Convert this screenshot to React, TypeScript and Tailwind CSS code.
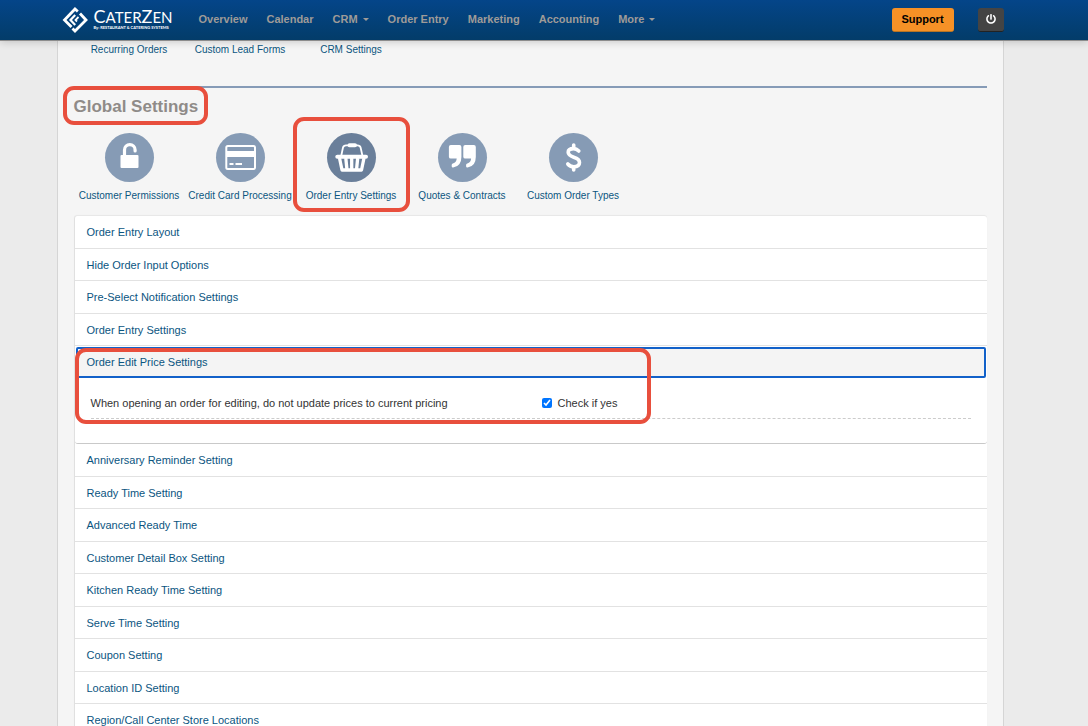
import React, { useState } from 'react';
import { FaPowerOff } from 'react-icons/fa';

const navItems = [
  { label: 'Overview', menu: false },
  { label: 'Calendar', menu: false },
  { label: 'CRM', menu: true },
  { label: 'Order Entry', menu: false },
  { label: 'Marketing', menu: false },
  { label: 'Accounting', menu: false },
  { label: 'More', menu: true },
];

const sectionsBefore = ['Order Entry Layout', 'Hide Order Input Options', 'Pre-Select Notification Settings', 'Order Entry Settings'];

const sectionsAfter = [
  'Anniversary Reminder Setting',
  'Ready Time Setting',
  'Advanced Ready Time',
  'Customer Detail Box Setting',
  'Kitchen Ready Time Setting',
  'Serve Time Setting',
  'Coupon Setting',
  'Location ID Setting',
  'Region/Call Center Store Locations',
];

const Logo: React.FC = () => (
  <a href="#" className="flex items-center gap-[6px] text-white">
    <svg viewBox="0 0 26 26" className="size-[26px]" fill="none" stroke="currentColor" strokeWidth="2.8">
      <path d="M15.8 4.5L13 2L2.5 13L9.5 20M18 6.5L24 13L13 24L10.5 21.5" />
      <path d="M13.2 8L8.5 13L13.2 18" strokeWidth="2.2" />
      <path d="M16.5 10L13.5 13L15 14.5" strokeWidth="1.8" />
    </svg>
    <span className="flex flex-col pt-px font-[Lato,sans-serif]">
      <span className="text-[15px] leading-[15px]">
        <span className="text-[18px]">C</span>ATER<span className="text-[18px]">Z</span>EN
      </span>
      <span className="text-[4px] leading-[6px] font-bold whitespace-nowrap">By: RESTAURANT &amp; CATERING SYSTEMS</span>
    </span>
  </a>
);

const UnlockIcon = () => (
  <svg viewBox="0 0 49 49" className="size-[49px]">
    <rect x="15.5" y="22" width="18" height="13" rx="1" fill="white" />
    <path d="M19.5 23V17a5.3 5.3 0 0 1 10.6 0v1" fill="none" stroke="white" strokeWidth="3.2" strokeLinecap="round" />
  </svg>
);

const CardIcon = () => (
  <svg viewBox="0 0 49 49" className="size-[49px]" fill="white">
    <rect x="10.3" y="13" width="28.7" height="23" rx="1.5" fill="none" stroke="white" strokeWidth="2" />
    <path d="M10 18h29v6H10zM13.5 30h4v2h-4zM19.5 30H26v2h-6.5z" />
  </svg>
);

const BasketIcon = () => (
  <svg viewBox="0 0 49 49" className="size-[49px]" fill="none" stroke="white">
    <path d="M14.2 23L16 14.5Q16.6 12.3 19 12.3H30.500Q33 12.300 33.600 14.500L35.500 23" strokeWidth="1.8" />
    <path d="M22.500 12.300h5.500" strokeWidth="4" strokeLinecap="round" />
    <path d="M10.300 23.700H39" strokeWidth="4" strokeLinecap="round" />
    <path d="M12.500 25L15 37H34.500L37 25M18.800 25L20 37M24.700 25V37M30.700 25L29.500 37" strokeWidth="3.3" strokeLinejoin="round" />
  </svg>
);

const QuoteIcon = () => (
  <svg viewBox="0 0 49 49" className="size-[49px]" fill="white">
    <path d="M12.800 12h8.700q1.900 0 1.900 1.900v10q0 9.200-8.200 10.600-1.500.200-1.500-1.300v-1.200q0-1.200 1.200-1.500 3.600-1 3.800-4.900H12.800q-1.900 0-1.900-1.900v-9.800q0-1.900 1.900-1.900z" />
    <path d="M27.200 12h8.700q1.900 0 1.900 1.900v10q0 9.200-8.200 10.600-1.500.200-1.500-1.300v-1.200q0-1.200 1.200-1.500 3.600-1 3.800-4.900H27.200q-1.900 0-1.900-1.900v-9.800q0-1.900 1.900-1.900z" />
  </svg>
);

const DollarIcon = () => (
  <svg viewBox="0 0 49 49" className="size-[49px]" fill="none" stroke="white" strokeWidth="3.6" strokeLinecap="round">
    <path d="M29.800 18Q27.500 15.600 24.500 15.600Q19.200 15.600 19.200 19.300Q19.200 22.400 24.700 24.200Q30.500 26 30.500 29.500Q30.500 33.700 24.700 33.700Q21 33.700 18.800 31" />
    <path d="M24.700 12V15M24.700 34V37" />
  </svg>
);

const settings = [
  { label: 'Customer Permissions', icon: <UnlockIcon />, active: false },
  { label: 'Credit Card Processing', icon: <CardIcon />, active: false },
  { label: 'Order Entry Settings', icon: <BasketIcon />, active: true },
  { label: 'Quotes & Contracts', icon: <QuoteIcon />, active: false },
  { label: 'Custom Order Types', icon: <DollarIcon />, active: false },
];

const SectionRow: React.FC<{ label: string }> = ({ label }) => (
  <li className="border-b border-[#e2e2e2] odd:h-[33px] even:h-8">
    <button type="button" className="h-full w-full px-3 pt-px text-left text-[#0b557f]">{label}</button>
  </li>
);

const App: React.FC = () => {
  const [keepPrices, setKeepPrices] = useState(true);

  return (
    <div className="flex h-screen flex-col bg-[#ebebeb] font-['Liberation_Sans',Arial,sans-serif] text-[11px] text-[#333]">
      <header className="z-10 h-[41px] shrink-0 border-b border-[#8c8c8c] bg-linear-to-b from-[#044589] to-[#033c69] pr-7 shadow-[0_1px_8px_rgba(0,0,0,0.18)]">
        <div className="mx-auto flex h-[39px] max-w-[947px] items-center pl-[5px]">
          <Logo />
          <nav className="ml-[26px] flex gap-[19px] font-bold text-[#9f9b98]">
            {navItems.map((item) => (
              <a key={item.label} href="#" className="flex items-center gap-[5px]">
                {item.label}
                {item.menu && <span className="border-x-[3px] border-t-[3px] border-x-transparent" />}
              </a>
            ))}
          </nav>
          <button type="button" className="ml-auto h-6 w-[62px] rounded-[3px] border-b border-[#b87424] bg-[#f69126] font-bold text-black">Support</button>
          <button type="button" aria-label="Log out" className="ml-6 flex h-6 w-[26px] items-center justify-center rounded-[3px] border-b border-[#222] bg-[#444] text-white">
            <FaPowerOff className="size-[10px]" />
          </button>
        </div>
      </header>

      <main className="min-h-0 grow overflow-y-auto pr-7 [scrollbar-width:none]">
        <div className="mx-auto min-h-full max-w-[947px] border-x border-[#d5d5d5] bg-[#f5f5f5] px-4">
          <div className="grid h-[45px] grid-cols-[repeat(8,111px)] pt-[2px] text-center text-[10px] leading-[14px] text-[#0b557f]">
            <a href="#">Recurring Orders</a>
            <a href="#">Custom Lead Forms</a>
            <a href="#">CRM Settings</a>
          </div>

          <section className="border-t-2 border-[#869bb7]">
            <h2 className="relative inline-block pt-[9px] text-[17px] leading-5 font-bold text-[#8f8b88]">
              Global Settings
              <span className="absolute -top-[2px] -right-[10px] -left-[11px] h-[39px] rounded-[11px] border-4 border-[#e84f3d]" />
            </h2>

            <div className="mt-4 flex">
              {settings.map((item) => (
                <a key={item.label} href="#" className="relative flex w-[111px] flex-col items-center text-[10px] leading-[14px] whitespace-nowrap text-[#0b557f]">
                  <span className={item.active ? 'rounded-full bg-[#6a7f9a]' : 'rounded-full bg-[#869bb5]'}>
                    {item.icon}
                  </span>
                  <span className="mt-[7px]">{item.label}</span>
                  {item.active && <span className="absolute -inset-x-[3px] -top-4 h-[95px] rounded-[11px] border-4 border-[#e84f3d]" />}
                </a>
              ))}
            </div>

            <div className="mt-[13px] rounded-t-[3px] border-l border-[#e0e0e0] bg-white shadow-[0_-1px_1px_rgba(0,0,0,0.06)]">
              <ul>
                {sectionsBefore.map((label) => <SectionRow key={label} label={label} />)}
              </ul>
              <div className="relative">
                <button type="button" className="mx-px mt-px block h-[31px] w-[calc(100%-2px)] rounded-[2px] border-2 border-[#1261c9] bg-[#f4f4f4] px-[9px] text-left text-[#0b557f]">
                  Order Edit Price Settings
                </button>
                <div className="h-[66px] rounded-b-[3px] border-b border-[#c9c9c9] px-4 pt-[9px]">
                  <div className="flex h-8 items-center border-b border-dashed border-[#ccc] pt-px">
                    <label htmlFor="keep-prices" className="w-[451px]">When opening an order for editing, do not update prices to current pricing</label>
                    <label className="flex items-center gap-[6px]">
                      <input id="keep-prices" type="checkbox" checked={keepPrices} onChange={(e) => setKeepPrices(e.target.checked)} className="size-[10px]" />
                      Check if yes
                    </label>
                  </div>
                </div>
                <span className="pointer-events-none absolute top-px left-0 h-[76px] w-[576px] rounded-[11px] border-4 border-[#e84f3d]" />
              </div>
              <ul>
                {sectionsAfter.map((label) => <SectionRow key={label} label={label} />)}
              </ul>
            </div>
          </section>
        </div>
      </main>
    </div>
  );
};

export default App;
